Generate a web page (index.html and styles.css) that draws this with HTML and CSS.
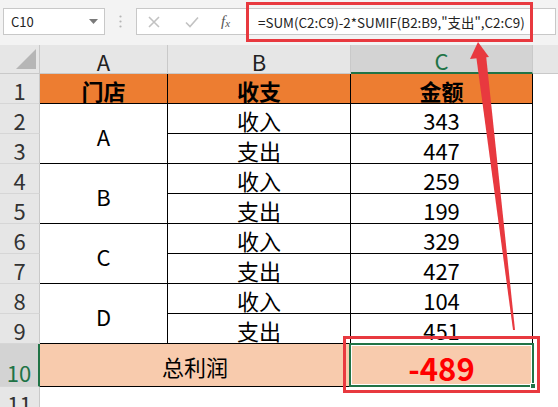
FILE: index.html
```html
<!DOCTYPE html>
<html lang="zh">
<head>
<meta charset="utf-8">
<link rel="stylesheet" href="styles.css">
</head>
<body>
<div class="app">
  <div class="formula-bar">
    <div class="namebox">
      <span class="ref">C10</span>
      <svg class="dd" width="9" height="5" viewBox="0 0 9 5"><path d="M0 0H9L4.5 5Z" fill="#7a7a7a"/></svg>
    </div>
    <div class="sep">
      <svg width="3" height="13" viewBox="0 0 3 13"><circle cx="1.5" cy="1.5" r="1.1" fill="#b5b5b5"/><circle cx="1.5" cy="6.5" r="1.1" fill="#b5b5b5"/><circle cx="1.5" cy="11.5" r="1.1" fill="#b5b5b5"/></svg>
    </div>
    <div class="input">
      <div class="btns">
        <svg class="btn" width="12" height="12" viewBox="0 0 12 12"><path d="M1 1L11 11M11 1L1 11" stroke="#c2c2c2" stroke-width="1.6" fill="none"/></svg>
        <svg class="btn" width="14" height="12" viewBox="0 0 14 12"><path d="M1 6.5L5 10.5L13 1.5" stroke="#c2c2c2" stroke-width="1.6" fill="none"/></svg>
        <span class="fx"><i>f</i><sub>x</sub></span>
      </div>
      <div class="formula">=SUM(C2:C9)-2*SUMIF(B2:B9,"支出",C2:C9)</div>
    </div>
  </div>

  <div class="sheet">
    <div class="corner"><span class="tri"></span></div>
    <div class="ch">A</div>
    <div class="ch">B</div>
    <div class="ch sel">C</div>
    <div class="ch last"></div>

    <div class="rh">1</div>
    <div class="c hd ca">门店</div>
    <div class="c hd cb">收支</div>
    <div class="c hd cc">金额</div>
    <div class="e"></div>

    <div class="rh">2</div>
    <div class="c m ca span2">A</div>
    <div class="c cb">收入</div>
    <div class="c cc">343</div>
    <div class="e"></div>

    <div class="rh">3</div>
    <div class="c cb">支出</div>
    <div class="c cc">447</div>
    <div class="e"></div>

    <div class="rh">4</div>
    <div class="c m ca span2">B</div>
    <div class="c cb">收入</div>
    <div class="c cc">259</div>
    <div class="e"></div>

    <div class="rh">5</div>
    <div class="c cb">支出</div>
    <div class="c cc">199</div>
    <div class="e"></div>

    <div class="rh">6</div>
    <div class="c m ca span2">C</div>
    <div class="c cb">收入</div>
    <div class="c cc">329</div>
    <div class="e"></div>

    <div class="rh">7</div>
    <div class="c cb">支出</div>
    <div class="c cc">427</div>
    <div class="e"></div>

    <div class="rh">8</div>
    <div class="c m ca span2">D</div>
    <div class="c cb">收入</div>
    <div class="c cc">104</div>
    <div class="e"></div>

    <div class="rh">9</div>
    <div class="c cb">支出</div>
    <div class="c cc">451</div>
    <div class="e"></div>

    <div class="rh selr">10</div>
    <div class="c total ab">总利润</div>
    <div class="c total cc result">-489<span class="selbox"></span><span class="handle"></span></div>
    <div class="e"></div>

    <div class="rh cut">11</div>
    <div class="e ab"></div>
    <div class="e cc"></div>
    <div class="e"></div>
  </div>

  <div class="redbox rb1"></div>
  <div class="redbox rb2"></div>
  <svg class="arrow" width="558" height="407" viewBox="0 0 558 407">
    <polygon points="478,42 470,59 489,57" fill="#e8393f"/>
    <polygon points="476,55 486,55 515,330 513,330" fill="#e8393f"/>
  </svg>
</div>
</body>
</html>
```

FILE: styles.css
```css
* { box-sizing: border-box; }
html, body { margin: 0; padding: 0; }
body {
  width: 558px;
  height: 407px;
  overflow: hidden;
  background: #fff;
  font-family: "Noto Sans CJK SC", "Noto Sans", sans-serif;
  color: #000;
}
.app { position: relative; width: 558px; height: 407px; overflow: hidden; }

.formula-bar {
  height: 45px;
  background: #f3f3f3;
  display: flex;
  align-items: flex-start;
  padding: 8px 2px 0 3px;
}
.namebox {
  width: 102px;
  height: 27px;
  background: #fff;
  border: 1px solid #c8c8c8;
  display: flex;
  align-items: center;
  justify-content: space-between;
  padding: 0 6px 0 7px;
  font-size: 13px;
  color: #222;
}
.sep {
  width: 31px;
  height: 27px;
  display: flex;
  align-items: center;
  justify-content: center;
  padding-right: 1px;
}
.input {
  flex: 1;
  height: 27px;
  background: #fff;
  border: 1px solid #c8c8c8;
  display: flex;
  align-items: center;
}
.btns {
  width: 110px;
  height: 100%;
  display: flex;
  align-items: center;
  padding-left: 11px;
}
.btns .btn:first-child { margin-right: 25px; }
.btns .btn:nth-child(2) { margin-right: 22px; }
.fx {
  font-family: "Liberation Serif", serif;
  font-size: 15px;
  color: #555;
  line-height: 1;
}
.fx sub { font-size: 11px; font-style: italic; vertical-align: -1px; }
.formula {
  padding-left: 11px;
  font-size: 13.4px;
  color: #222;
  white-space: nowrap;
}

.sheet {
  display: grid;
  grid-template-columns: 40px 128px 183px 182px 1fr;
  grid-template-rows: 29px repeat(9, 30px) 43px 20px;
}
.corner {
  background: #e6e6e6;
  border-right: 1px solid #c9c9c9;
  border-bottom: 1px solid #c9c9c9;
  position: relative;
}
.tri {
  position: absolute;
  right: 3px;
  bottom: 4px;
  width: 0;
  height: 0;
  border-left: 20px solid transparent;
  border-bottom: 20px solid #b6b6b6;
}
.ch {
  background: #e6e6e6;
  border-right: 1px solid #c9c9c9;
  border-bottom: 1px solid #c9c9c9;
  display: flex;
  align-items: center;
  justify-content: center;
  font-size: 22px;
  color: #222;
  line-height: 1;
  padding-top: 3px;
}
.ch.sel {
  background: #d3d3d3;
  color: #217346;
  border-bottom: 2px solid #217346;
}
.ch.last { border-right: none; }

.rh {
  grid-column: 1;
  background: #e6e6e6;
  border-right: 1px solid #c9c9c9;
  border-bottom: 1px solid #d6d6d6;
  display: flex;
  align-items: flex-end;
  justify-content: center;
  font-size: 22px;
  line-height: 22px;
  color: #333;
  padding-bottom: 2px;
}
.rh.selr {
  background: #d3d3d3;
  color: #217346;
  border-right: 2px solid #217346;
  padding-bottom: 3px;
}
.rh.cut {
  align-items: flex-start;
  padding: 5px 0 0 0;
  border-bottom: none;
  overflow: hidden;
}

.c {
  border-right: 1px solid #000;
  border-bottom: 1px solid #000;
  display: flex;
  align-items: flex-end;
  justify-content: center;
  font-size: 22px;
  line-height: 22px;
  padding-bottom: 2px;
  position: relative;
}
.ca { grid-column: 2; }
.cb { grid-column: 3; }
.cc { grid-column: 4; }
.ab { grid-column: 2 / 4; }
.span2 { grid-row: span 2; }
.c.m { align-items: center; padding: 4px 0 0 0; }
.hd { background: #ed7d31; font-weight: bold; }
.e { background: #fff; }
.e.ab, .e.cc { border: none; }

.total {
  background: #f8cbad;
  align-items: center;
  padding: 2px 0 0 0;
}
.result {
  color: #ff0000;
  font-weight: bold;
  font-size: 31px;
  line-height: 31px;
  padding-top: 5px;
}
.selbox {
  position: absolute;
  left: -2px;
  top: -1px;
  right: -2px;
  bottom: -1px;
  border: 2px solid #217346;
  box-shadow: inset 0 0 0 1px #fff;
}
.handle {
  position: absolute;
  right: -4px;
  bottom: -3px;
  width: 6px;
  height: 6px;
  background: #217346;
  border: 1px solid #fff;
}

.redbox {
  position: absolute;
  border: 3px solid #e8393f;
  pointer-events: none;
}
.rb1 { left: 246px; top: 2px; width: 287px; height: 40px; }
.rb2 { left: 343px; top: 336px; width: 197px; height: 57px; }
.arrow { position: absolute; left: 0; top: 0; pointer-events: none; }
```
